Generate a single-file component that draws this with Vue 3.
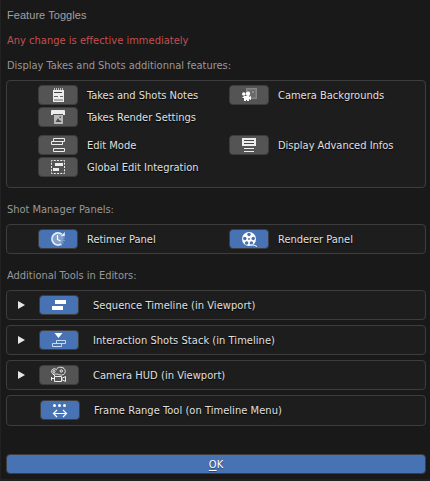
<script setup>
import { h } from 'vue'

const features = [
  { icon: 'notes', label: 'Takes and Shots Notes' },
  { icon: 'background', label: 'Camera Backgrounds' },
  { icon: 'render', label: 'Takes Render Settings' },
  null,
  { icon: 'edit', label: 'Edit Mode' },
  { icon: 'infos', label: 'Display Advanced Infos' },
  { icon: 'global', label: 'Global Edit Integration' },
  null,
]
const panels = [
  { icon: 'retimer', label: 'Retimer Panel' },
  { icon: 'reel', label: 'Renderer Panel' },
]
const tools = [
  { icon: 'sequence', label: 'Sequence Timeline (in Viewport)', on: true, arrow: true },
  { icon: 'stack', label: 'Interaction Shots Stack (in Timeline)', on: true, arrow: true },
  { icon: 'hud', label: 'Camera HUD (in Viewport)', on: false, arrow: true },
  { icon: 'range', label: 'Frame Range Tool (on Timeline Menu)', on: true, arrow: false },
]

const p = (d, attrs = {}) => h('path', { d, fill: '#ececec', ...attrs })
const line = (d, stroke = '#ececec', width = 1) => p(d, { fill: 'none', stroke, 'stroke-width': width })
const dot = (cx, cy, r, fill = '#fff') => h('circle', { cx, cy, r, fill })
const ring = (cx, cy, r, stroke = '#ececec') => h('circle', { cx, cy, r, fill: 'none', stroke, 'stroke-width': 1 })

const glyphs = {
  notes: () => [
    p('M15 5H26V17H15Z'),
    line('M16.5 3V5M18.5 3V5M20.5 3V5M22.5 3V5M24.5 3V5', '#bdbdbd'),
    line('M16 7.5H24', '#444'), line('M16 11.5H20M22 11.5H25', '#666'),
    p('M16 14H25V16H16Z', { fill: '#aaa' }),
  ],
  render: () => [
    p('M13 4Q13 3 14 3H26Q27 3 27 4V8H25V7H15V8H13Z'),
    p('M16 8H25V17H16Z', { fill: '#b9b9b9' }),
    p('M17.5 15L20 11L21.5 13.5L22 13L23.5 15Z', { fill: '#4d4d4d' }), p('M21.5 9.5H23V11H21.5Z', { fill: '#555' }),
  ],
  edit: () => [line('M15.5 3.5H26.5V6.5H15.5ZM13.5 6.5H24.5V9.5H13.5ZM15.5 13.5H26.5V16.5H15.5Z')],
  global: () => [
    h('rect', { x: 13.5, y: 3.5, width: 13, height: 13, fill: 'none', stroke: '#ececec', 'stroke-dasharray': '2 1.25', 'stroke-dashoffset': 1 }),
    p('M17 6H25V9H17ZM15 11H21V14H15Z'),
  ],
  background: () => [
    p('M17 3H28V14H22V11H18V7H17Z', { fill: '#858585' }), p('M18.5 4.5H26.5V12.5H20V9H18.5Z', { fill: '#696969' }),
    line('M24 6V8M23 7H25M20 6H21', '#999'),
    dot(14.8, 9, 1.8), dot(19, 8.7, 2.2), p('M13 13L15 11V11H20V12L22 11V15L20 14V16H18V15H17V16H15V13Z', { fill: '#fff' }),
  ],
  infos: () => [p('M13 3H27V11H13Z'), line('M15 5.5H25M15 8.5H25', '#444'), line('M15 13.5H25M15 16.5H25')],
  retimer: () => [
    dot(20, 10, 5.5, '#829fcd'),
    line('M23.8 5.3A6 6 0 1 0 23.3 15', '#e7edf7', 1.8),
    p('M22.5 7.3H26.8V3Z'), line('M19.5 6V10.5L22.5 12', '#fff', 1.2),
    line('M26 8.5V9.5M26 11V12M25 13.5V14.5M23.5 15.5V16.5', '#b9cae5'),
  ],
  reel: () => [
    dot(20, 10, 7), ...[[20, 5.6], [24.2, 9.4], [22.4, 14], [17.6, 14], [15.8, 9.4]].map(([x, y]) => dot(x, y, 1.75, '#4772b3')),
    dot(20, 10, 0.9, '#4772b3'), line('M22 16Q25 15.5 28 17.5', '#fff'),
  ],
  sequence: () => [p('M16 5H27V9H16ZM13 11H24V15H13Z', { fill: '#fff' })],
  stack: () => [p('M15.5 3H23.5L19.5 8Z', { fill: '#fff' }), line('M17.5 10.5H26.5V13.5H17.5ZM13.5 13.5H22.5V16.5H13.5Z', '#cbd7eb')],
  hud: () => [
    ring(15, 6.5, 1),
    line('M15 9.2A2.7 2.7 0 1 1 17.3 4.7C18.3 2 22.5 1.4 25 3.5C27.5 6 26 10 22.5 10C20 10 19.5 8.7 15 9.2'),
    ring(22.3, 6, 1.2), line('M14 9L16 11'), line('M15.5 11.5H22.5V16.5H15.5ZM12.5 12V15.5M12.5 13.5H15M22.5 13.5L26.5 11.5V16.5L22.5 14.5'),
  ],
  range: () => [dot(14.5, 5.5, 1.5), dot(19.5, 5.5, 1.5), dot(24.5, 5.5, 1.5), line('M14 13.5H26M17 10L13.5 13.5L17 17M23 10L26.5 13.5L23 17', '#fff', 1.2)],
}

const Icon = (props) => h('svg', { width: 40, height: 20, viewBox: '0 0 40 20' }, glyphs[props.name]())
Icon.props = ['name']
</script>

<template>
  <main class="dialog">
    <h1 class="title">Feature Toggles</h1>
    <p class="caption warning">Any change is effective immediately</p>
    <p class="caption first">Display Takes and Shots additionnal features:</p>
    <section class="box grid features">
      <div v-for="(f, i) in features" :key="i" class="item">
        <template v-if="f">
          <button class="toggle"><Icon :name="f.icon" /></button>
          <span class="label">{{ f.label }}</span>
        </template>
      </div>
    </section>
    <p class="caption second">Shot Manager Panels:</p>
    <section class="box grid panels">
      <div v-for="f in panels" :key="f.icon" class="item">
        <button class="toggle on"><Icon :name="f.icon" /></button>
        <span class="label">{{ f.label }}</span>
      </div>
    </section>
    <p class="caption third">Additional Tools in Editors:</p>
    <div class="tools">
      <section v-for="t in tools" :key="t.icon" class="box tool" :class="{ plain: !t.arrow }">
        <svg v-if="t.arrow" class="arrow" width="7" height="8" viewBox="0 0 7 8"><path d="M0 0L7 4L0 8Z" fill="#e6e6e6" /></svg>
        <button class="toggle" :class="{ on: t.on }"><Icon :name="t.icon" /></button>
        <span class="label">{{ t.label }}</span>
      </section>
    </div>
    <button class="ok"><span class="key">O</span>K</button>
  </main>
</template>

<style>
body { margin: 0; background: #191919; }
</style>

<style scoped>
* { box-sizing: border-box; }
.dialog {
  display: flex; flex-direction: column; width: 430px; height: 481px;
  padding: 5px 4px 0 5px; border-left: 1px solid #222; border-bottom: 2px solid #222;
  background: #191919; color: #e0e0e0;
  font: 11px/22px "DejaVu Sans Condensed", "DejaVu Sans", sans-serif; font-stretch: condensed; white-space: nowrap;
}
.title { margin: 0; padding-left: 1px; font: 11px/20px "Liberation Sans", sans-serif; letter-spacing: 0.05px; color: #a0a0a0; }
.caption { margin: 0; padding-left: 1px; height: 20px; color: #989898; letter-spacing: -0.02px; }
.warning { margin-top: 5px; color: #c35050; letter-spacing: 0.02px; }
.first { margin-top: 5px; }
.second { margin-top: 11px; }
.third { margin-top: 11px; }
.box { border: 1px solid #3d3d3d; border-radius: 4px; background: #1d1d1d; }
.grid { display: grid; grid-template-columns: 191px 1fr; padding-left: 31px; }
.features { margin-top: 5px; height: 108px; padding-top: 4px; grid-template-rows: 22px 28px 22px 22px; }
.panels { margin-top: 5px; height: 30px; padding-top: 4px; }
.item { display: flex; height: 20px; gap: 9px; }
.toggle { display: block; flex: none; width: 40px; height: 20px; padding: 0; border: 1px solid #3d3d3d; border-radius: 4px; background: #545454; }
.toggle.on { background: #4772b3; }
.toggle svg { display: block; margin: -1px; }
.label { height: 20px; text-shadow: 0 1px 1px #000; }
.tools { display: flex; flex-direction: column; gap: 5px; margin-top: 5px; }
.tool { display: flex; align-items: center; height: 30px; padding-left: 11px; }
.arrow { margin-right: 14px; }
.tool .label { margin-left: 14px; letter-spacing: 0.05px; }
.tool.plain { height: 31px; padding: 0 0 1px 33px; }
.ok { height: 20px; margin-top: 28px; padding: 1px 0 0; border: 1px solid #3d3d3d; border-radius: 4px; background: #4772b3; color: #fff; font: 11px/17px "DejaVu Sans Condensed", "DejaVu Sans", sans-serif; font-stretch: condensed; text-shadow: 0 1px 1px #0006; }
.key { text-decoration: underline; text-underline-offset: 2px; text-decoration-thickness: 1px; }
</style>
